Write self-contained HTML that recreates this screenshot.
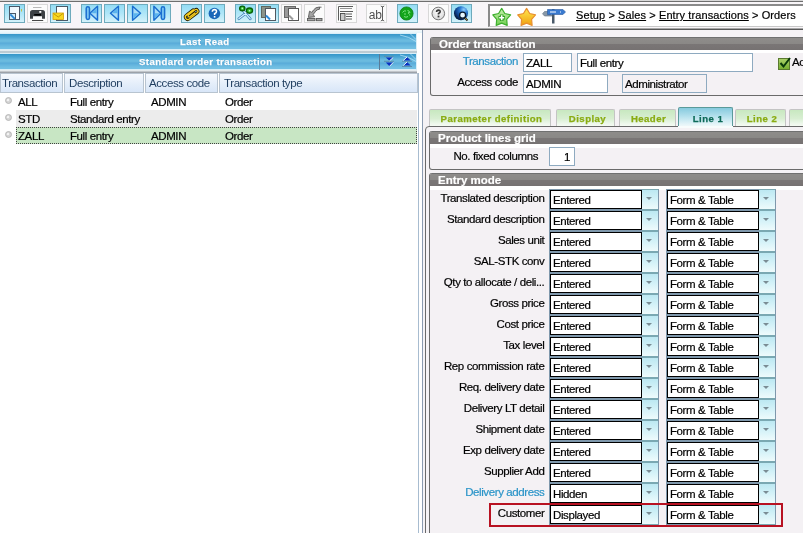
<!DOCTYPE html>
<html><head><meta charset="utf-8">
<style>
*{box-sizing:border-box;margin:0;padding:0}
html,body{width:803px;height:533px;overflow:hidden;-webkit-font-smoothing:antialiased;background:#f5f2f5;font-family:"Liberation Sans",sans-serif;font-size:11.5px;letter-spacing:-0.4px;color:#000}
.a{position:absolute}
.t{position:absolute;white-space:nowrap;line-height:13px;will-change:transform;-webkit-text-stroke:0.2px currentColor}
/* toolbar */
#tb{left:0;top:0;width:803px;height:30px;background:#f8f5f8;border-top:1px solid #d8d8d8}
.btn{position:absolute;top:4px;width:21px;height:19px;border:1px solid #6eaabc;background:linear-gradient(#94dcf4,#b0e6f8 50%,#d4f2fa)}
.btnw{position:absolute;top:4px;width:21px;height:19px;border:1px solid #d8d8d8;background:#fbfbfb}
/* blue bars */
.bar{position:absolute;left:0;width:417px;height:17px;background:linear-gradient(#3596c8 0px,#4aa6d4 3px,#6cbce0 6px,#68b8de 8px,#58aad8 9px,#5eb0dc 10px,#70bee2 13px,#78c2e4 16px);border:1px solid #d8eef8;border-left:none}
.bar .t{color:#fff;font-weight:bold;font-size:9.6px;letter-spacing:0.4px;-webkit-text-stroke:0.25px #fff;text-shadow:0 0 1px #2a7ab0}
/* grid */
.gh{position:absolute;top:73px;height:20px;border:1px solid #b8c4d0;background:linear-gradient(#f6f9fe,#e6effa 50%,#d8e6f8 100%);color:#1e3c5e}
.gh .t{-webkit-text-stroke:0}
.row{position:absolute;left:0;width:417px;height:17px}
/* right */
.box{position:absolute;border:1px solid #6a6a6a;border-top:none;border-radius:3px 0 0 3px;background:#f4f1f4}
.band{position:absolute;left:0;right:0;top:0;height:13px;background:linear-gradient(#707070 0px,#707070 1px,#8e8c8a 1px,#8a8886 7px,#7a7676 7px,#767272 13px);border-radius:2px 0 0 0}
.band .t{color:#fff;font-weight:bold;font-size:11.5px;letter-spacing:0;left:8px;top:1px}
.lbl{position:absolute;white-space:nowrap;text-align:right;line-height:13px;will-change:transform;-webkit-text-stroke:0.2px currentColor}
.inp{position:absolute;height:19px;border:1px solid #8eaac0;background:#fff}
.inp .t{left:2px;top:3px}
.sel{position:absolute;width:110px;height:22px;background:#7f98ac}
.sel .w{position:absolute;left:1px;top:1px;width:92px;height:19px;border:1px solid #000;background:#fff}
.sel .w .t{left:2px;top:3px}
.sel .dd{position:absolute;left:93px;top:0;width:16px;height:21px;border-top:1px solid #7aa8b2;border-bottom:1px solid #7aa8b2;background:linear-gradient(#bce8f2,#d4f2f8 50%,#eefbfc)}
.sel .dd:after{content:"";position:absolute;left:4px;top:7px;border-left:3.5px solid transparent;border-right:3.5px solid transparent;border-top:3.5px solid #7a8c94}
.tab{position:absolute;top:109px;height:18px;border:1px solid #c4c4c4;border-bottom:none;border-radius:2px 2px 0 0;background:linear-gradient(#c8e8c0,#d8eed2 50%,#eef8ec 80%,#f8fcf6);color:#8aac12;font-weight:bold;font-size:9.6px;letter-spacing:0.45px;text-align:center;line-height:16px;padding-top:1px;-webkit-text-stroke:0.25px currentColor;will-change:transform}
</style></head><body>

<!-- TOOLBAR -->
<div id="tb" class="a">
  <div class="a" style="left:0;top:0;width:803px;height:1px;background:#6e6e6e"></div>
  <div class="a" style="left:0;top:27px;width:803px;height:1px;background:#a8a8a8"></div>
  <div class="a" style="left:0;top:28px;width:803px;height:1px;background:#585858"></div>
</div>
<div class="btn" style="left:4px"></div>
<div class="btnw" style="left:27px"></div>
<div class="btn" style="left:50px"></div>
<div class="btn" style="left:81px"></div>
<div class="btn" style="left:104px"></div>
<div class="btn" style="left:127px"></div>
<div class="btn" style="left:150px"></div>
<div class="btn" style="left:181px"></div>
<div class="btn" style="left:204px"></div>
<div class="btn" style="left:235px"></div>
<div class="btn" style="left:258px"></div>
<div class="btnw" style="left:281px"></div>
<div class="btnw" style="left:304px"></div>
<div class="btnw" style="left:336px"></div>
<div class="btnw" style="left:366px"></div>
<div class="btn" style="left:397px"></div>
<div class="btnw" style="left:428px"></div>
<div class="btn" style="left:451px"></div>
<!-- breadcrumb -->
<div class="a" style="left:488px;top:4px;width:320px;height:23px;border-top:2px solid #8a8a8a;border-left:2px solid #8a8a8a;border-bottom:1px solid #c8c8c8;background:#fff"></div>
<div class="t" style="left:576px;top:9px;font-size:11px;letter-spacing:0.1px"><u>Setup</u> &gt; <u>Sales</u> &gt; <u>Entry transactions</u> &gt; Orders</div>

<svg class="a" style="left:0;top:0" width="803" height="30" viewBox="0 0 803 30">
<defs>
<linearGradient id="gy" x1="0" y1="0" x2="0" y2="1"><stop offset="0" stop-color="#ffe850"/><stop offset="1" stop-color="#f0a010"/></linearGradient>
<linearGradient id="gg" x1="0" y1="0" x2="0" y2="1"><stop offset="0" stop-color="#c8f0b0"/><stop offset="1" stop-color="#70d050"/></linearGradient>
<radialGradient id="glb" cx="0.4" cy="0.3" r="0.7"><stop offset="0" stop-color="#a0d8ff"/><stop offset="0.5" stop-color="#2070c0"/><stop offset="1" stop-color="#0a2050"/></radialGradient>
</defs>
<!-- new doc -->
<defs><linearGradient id="dg" x1="0" y1="0" x2="1" y2="1"><stop offset="0" stop-color="#e8f4fc"/><stop offset="1" stop-color="#ffffff"/></linearGradient></defs>
<rect x="9.5" y="6.5" width="10" height="13" fill="url(#dg)" stroke="#4a5868" stroke-width="1"/>
<rect x="9.5" y="13.5" width="6" height="6" fill="#d0ecfa" stroke="#4a5868"/>
<path d="M10.3 14.3 L14.8 18.8" stroke="#2a86d4" stroke-width="1.8"/>
<path d="M21.5 9 V11.5" stroke="#c8c040" stroke-width="1"/>
<!-- printer -->
<path d="M33 7.5 H41.5" stroke="#b8b8b8"/>
<path d="M30 12.5 Q30 10 32.5 10 H42.5 Q45 10 45 12.5 V18.7 H42 V16.2 H33 V18.7 H30 Z" fill="#3c4044"/>
<rect x="34.2" y="14" width="6.8" height="1.6" fill="#000"/>
<rect x="39.3" y="11" width="2" height="1.8" fill="#fff"/>
<path d="M32 20.5 H43.2" stroke="#484848" stroke-width="1"/>
<!-- mail doc -->
<rect x="56.5" y="6.5" width="11" height="14" fill="#fff" stroke="#4a5a68"/>
<rect x="53" y="13" width="10.5" height="6.5" fill="#f8d820" stroke="#d8a000" stroke-width="0.8"/>
<path d="M53.5 13.5 L58.2 17 L63 13.5" stroke="#c09000" stroke-width="0.9" fill="none"/>
<!-- nav -->
<g stroke="#1a6ed0" stroke-width="1.5" stroke-linejoin="round">
<rect x="86.2" y="6.8" width="3.3" height="12.7" rx="1.65" fill="#78c4f2"/>
<path d="M97.5 6.3 V20.3 L89.9 13.3 Z" fill="#a8dcf8"/>
<path d="M118.4 6.3 V20.3 L110.5 13.3 Z" fill="#a8dcf8"/>
<path d="M132.6 6.3 V20.3 L140.5 13.3 Z" fill="#a8dcf8"/>
<path d="M153.9 6.3 V20.3 L160.8 13.3 Z" fill="#a8dcf8"/>
<rect x="161.3" y="6.8" width="3.3" height="12.7" rx="1.65" fill="#78c4f2"/>
</g>
<g fill="#5ab4ee">
<path d="M96.6 8 L91.2 13.3 L96.6 13.3 Z"/>
<path d="M117.5 8 L111.8 13.3 L117.5 13.3 Z"/>
<path d="M133.5 13.3 L139.2 13.3 L133.5 18.6 Z"/>
<path d="M154.8 13.3 L159.6 13.3 L154.8 18.6 Z"/>
</g>
<!-- paperclip -->
<g transform="translate(191 14) rotate(-38) scale(0.88) translate(-191 -13.5)">
<path d="M196 11.2 H186 Q183.2 11.2 183.2 14 Q183.2 16.8 186 16.8 H197.5 Q199.6 16.8 199.6 14.6 Q199.6 12.6 197.5 12.6 H188 Q186.8 12.6 186.8 14 Q186.8 15.2 188 15.2 H195" fill="none" stroke="#1a1400" stroke-width="3.2" stroke-linecap="round"/>
<path d="M196 11.2 H186 Q183.2 11.2 183.2 14 Q183.2 16.8 186 16.8 H197.5 Q199.6 16.8 199.6 14.6 Q199.6 12.6 197.5 12.6 H188 Q186.8 12.6 186.8 14 Q186.8 15.2 188 15.2 H195" fill="none" stroke="#f4cc20" stroke-width="1.5" stroke-linecap="round"/>
</g>
<!-- help -->
<circle cx="214.4" cy="13.5" r="5.8" fill="#1a68b8"/>
<path d="M212.3 11.8 Q212.5 9.6 214.5 9.6 Q216.6 9.7 216.5 11.6 Q216.4 12.8 214.6 13.6 V15" stroke="#fff" stroke-width="1.5" fill="none"/>
<rect x="213.8" y="16" width="1.6" height="1.6" fill="#fff"/>
<!-- scissors -->
<path d="M238.8 18.8 L248.5 11 M243.5 11 L250.3 18.8" stroke="#3a78b0" stroke-width="2.6" stroke-linecap="round"/>
<path d="M238.8 18.8 L248.5 11 M243.5 11 L250.3 18.8" stroke="#d0f0ff" stroke-width="1.2" stroke-linecap="round"/>
<ellipse cx="242.3" cy="8.4" rx="2.6" ry="2.3" fill="#30c030" stroke="#086008" stroke-width="1.4"/>
<ellipse cx="249.5" cy="10.6" rx="3" ry="2.6" fill="#30c030" stroke="#086008" stroke-width="1.4"/>
<circle cx="242.3" cy="8.4" r="0.8" fill="#c8f8c0"/><circle cx="249.5" cy="10.8" r="0.8" fill="#c8f8c0"/>
<!-- copy -->
<rect x="261.5" y="6.5" width="9" height="11" fill="#8a948a" stroke="#606860"/>
<rect x="265.5" y="8.5" width="10" height="12" fill="#fff" stroke="#505860"/>
<path d="M266 15.5 L270 19.5" stroke="#2a8ad8" stroke-width="2"/>
<!-- paste gray -->
<rect x="284.5" y="6.5" width="11" height="11" fill="#9a9a9a" stroke="#686868"/>
<rect x="288.5" y="8.5" width="10" height="12" fill="#fff" stroke="#585858"/>
<path d="M289 15.5 L293 19.5" stroke="#9a9a9a" stroke-width="2"/>
<!-- gray arrow -->
<path d="M319.5 7 Q315.5 7 313.5 10 L311.8 12.4 L309.5 11.2 L308.4 17.4 L314.6 16.8 L313.2 14.4 L315.6 11.4 Q316.8 9.4 319.5 9.2 Z" fill="#a4a4a4" stroke="#5a5a5a" stroke-width="0.9" stroke-linejoin="round"/>
<path d="M319.5 7.2 H321.5" stroke="#5a5a5a" stroke-width="0.9"/>
<rect x="307.5" y="18.5" width="7.5" height="2.2" fill="#a8a8a8" stroke="#5a5a5a" stroke-width="0.9"/>
<rect x="316.5" y="18.5" width="5.5" height="2.2" fill="#a8a8a8" stroke="#5a5a5a" stroke-width="0.9"/>
<!-- form -->
<path d="M338.5 6.5 H353 M338.5 6.5 V20.5 M340 11.5 H353 M346 14 H352 M346 16.5 H352 M346 19 H352" stroke="#484848" stroke-width="0.9" fill="none"/>
<path d="M340 9 l1 -1 l1 1 l1 -1 l1 1 l1 -1 l1 1 l1 -1 l1 1 l1 -1 l1 1 l1 -1 l1 1" stroke="#686868" stroke-width="0.7" fill="none"/>
<rect x="340.5" y="13.5" width="4.5" height="7" fill="#c8c8c8" stroke="#484848" stroke-width="0.9"/>
<!-- ab -->
<text x="368.8" y="19.2" font-family="Liberation Sans" font-size="12" fill="#505050" letter-spacing="-0.3">ab</text>
<path d="M382.5 6.5 V20.5 M380.8 6 L382.5 7 L384.2 6 M380.8 21 L382.5 20 L384.2 21" stroke="#3a3a3a" stroke-width="0.8" fill="none"/>
<!-- green globe -->
<circle cx="406.5" cy="13.5" r="6.6" fill="#12a41a" stroke="#0a7a12" stroke-width="0.8"/>
<path d="M402.5 12.5 q1.5 -2.5 3.5 -1.5 M404 16.5 q2 1.5 4 0 M407.5 10.5 q2 0 2.5 2.5 M409 14.5 l1.2 1" stroke="#7ae080" stroke-width="1" fill="none"/>
<circle cx="405" cy="14" r="0.7" fill="#a0f0a0"/><circle cx="408.6" cy="13" r="0.7" fill="#a0f0a0"/>
<!-- gray help -->
<defs><radialGradient id="ghg" cx="0.5" cy="0.4" r="0.6"><stop offset="0" stop-color="#ffffff"/><stop offset="1" stop-color="#d8d8d8"/></radialGradient>
<radialGradient id="glb2" cx="0.7" cy="0.25" r="0.8"><stop offset="0" stop-color="#90d0ff"/><stop offset="0.35" stop-color="#2878d0"/><stop offset="0.75" stop-color="#0c3a80"/><stop offset="1" stop-color="#061838"/></radialGradient></defs>
<circle cx="438.3" cy="13.5" r="6.3" fill="url(#ghg)" stroke="#6a6a6a" stroke-width="0.9"/>
<path d="M436.6 12 Q436.7 10.2 438.4 10.2 Q440.2 10.3 440.1 11.9 Q440 12.9 438.5 13.6 V14.6" stroke="#383838" stroke-width="1.7" fill="none"/>
<rect x="437.6" y="15.6" width="1.8" height="1.8" fill="#383838"/>
<!-- globe search -->
<circle cx="461" cy="13.2" r="7" fill="url(#glb2)"/>
<path d="M464.5 17.5 L467.5 20.5" stroke="#202020" stroke-width="1.8"/>
<path d="M464.8 17.8 L467.2 20.2" stroke="#c8a030" stroke-width="0.8"/>
<circle cx="462.6" cy="15.2" r="3" fill="#e8f8ff" stroke="#0a1a30" stroke-width="1.3"/>
<!-- stars -->
<path d="M501.7 8.4 L504.8 13.5 L510.6 14.9 L506.7 19.4 L507.2 25.4 L501.7 23.1 L496.2 25.4 L496.7 19.4 L492.8 14.9 L498.6 13.5 Z" fill="url(#gg)" stroke="#40b030" stroke-width="1.2" stroke-linejoin="round"/>
<path d="M501.7 14.5 V21 M498.5 17.8 H505" stroke="#30a020" stroke-width="3.6"/>
<path d="M501.7 15.3 V20.3 M499.2 17.8 H504.2" stroke="#fff" stroke-width="1.6"/>
<path d="M526.6 8.4 L529.7 13.5 L535.5 14.9 L531.6 19.4 L532.1 25.4 L526.6 23.1 L521.1 25.4 L521.6 19.4 L517.7 14.9 L523.5 13.5 Z" fill="url(#gy)" stroke="#e89030" stroke-width="1.2" stroke-linejoin="round"/>
<!-- signpost -->
<rect x="552" y="9" width="2.5" height="14.5" fill="#4a5a6a"/>
<path d="M548 11.5 H544.5 L542.5 13.8 L544.5 16 H552 Z" fill="#8898a8" stroke="#607080" stroke-width="0.6"/>
<path d="M547.5 9.5 H563 L565.5 12 L563 14.5 H547.5 Z" fill="#3a7ad0" stroke="#2a5aa0" stroke-width="0.6"/>
<path d="M550 12 H556 M560 12 H561" stroke="#fff" stroke-width="1"/>
</svg>
<!-- LEFT PANEL -->
<div class="a" style="left:0;top:30px;width:422px;height:503px;background:#fff"></div>
<div class="a" style="left:0;top:30px;width:422px;height:3px;background:linear-gradient(#f4fafc,#e4f4fa)"></div>
<div class="bar" style="top:33px"><div class="t" style="left:180px;top:1px">Last Read</div></div>
<div class="a" style="left:0;top:50px;width:417px;height:4px;background:linear-gradient(#f8fcfe,#b8c8d0 40%,#b8c8d0 60%,#f0f8fc)"></div>
<div class="bar" style="top:53px"><div class="t" style="left:139px;top:1px">Standard order transaction</div>
  <div class="a" style="left:379px;top:0;width:1px;height:16px;background:#5a7c98"></div>
</div>
<div class="a" style="left:0;top:70px;width:417px;height:3px;background:linear-gradient(#f8fcfe,#8a9098)"></div>

<div class="gh" style="left:0;width:63px"><div class="t" style="left:1px;top:3px">Transaction</div></div>
<div class="gh" style="left:64px;width:80px"><div class="t" style="left:4px;top:3px">Description</div></div>
<div class="gh" style="left:145px;width:73px"><div class="t" style="left:3px;top:3px">Access code</div></div>
<div class="gh" style="left:219px;width:199px"><div class="t" style="left:4px;top:3px">Transaction type</div></div>

<div class="row" style="top:93px;background:#fff"></div>
<div class="row" style="top:110px;left:16px;width:401px;background:#ececec"></div>
<div class="row" style="top:127px;left:16px;width:401px;background:#c8e6c4;border:1px dotted #404040"></div>
<div class="t" style="left:18px;top:96px">ALL</div><div class="t" style="left:70px;top:96px">Full entry</div><div class="t" style="left:151px;top:96px">ADMIN</div><div class="t" style="left:225px;top:96px">Order</div>
<div class="t" style="left:18px;top:113px">STD</div><div class="t" style="left:70px;top:113px">Standard entry</div><div class="t" style="left:225px;top:113px">Order</div>
<div class="t" style="left:18px;top:130px">ZALL</div><div class="t" style="left:70px;top:130px">Full entry</div><div class="t" style="left:151px;top:130px">ADMIN</div><div class="t" style="left:225px;top:130px">Order</div>

<svg class="a" style="left:0;top:30px" width="422" height="120" viewBox="0 30 422 120">
<path d="M400 35 Q409 36.5 416 41.5 M410.5 34 L416 39.5" stroke="#b8e4f8" stroke-width="0.8" fill="none" opacity="0.9"/>
<path d="M400 55 Q409 56.5 416 61.5 M410.5 54 L416 59.5" stroke="#b8e4f8" stroke-width="0.8" fill="none" opacity="0.9"/>
<g>
<path d="M384 56.3 H394 M384 61.3 H394" stroke="#5a8aa8" stroke-width="0.9"/>
<path d="M385.8 57.5 H393.2 L389.5 60.8 Z M385.8 62.5 H393.2 L389.5 66.3 Z" fill="#0a30c0"/>
<path d="M389.5 60.8 L393.2 57.5 M389.5 66.3 L393.2 62.5" stroke="#fff" stroke-width="0.9"/>
<path d="M402 61.3 H412 M402 66.5 H412" stroke="#5a8aa8" stroke-width="0.9"/>
<path d="M403.3 60.5 H410.7 L407 57 Z M403.3 65.5 H410.7 L407 62 Z" fill="#0a30c0"/>
<path d="M403.3 60.5 L407 57 M403.3 65.5 L407 62" stroke="#fff" stroke-width="0.9"/>
</g>
<g fill="#d4d4d4" stroke="#b0b0b0" stroke-width="0.8">
<circle cx="8.5" cy="100.5" r="3"/><circle cx="8.5" cy="117.5" r="3"/><circle cx="8.5" cy="134.5" r="3"/>
</g>
<g fill="#f4f4f4"><circle cx="8" cy="100" r="1.2"/><circle cx="8" cy="117" r="1.2"/><circle cx="8" cy="134" r="1.2"/></g>
</svg>
<div class="a" style="left:418px;top:73px;width:1px;height:460px;background:#a8bcd0"></div>
<div class="a" style="left:422px;top:30px;width:1px;height:503px;background:#8a9ab0"></div>
<div class="a" style="left:423px;top:30px;width:380px;height:503px;background:#f5f2f5"></div>

<!-- RIGHT PANEL -->
<div class="box" style="left:430px;top:37px;width:380px;height:59px">
  <div class="band"><div class="t">Order transaction</div></div>
  <div class="a" style="left:0;top:13px;width:100%;height:3px;background:#fff"></div>
</div>
<div class="lbl" style="left:440px;width:78px;top:55px;color:#2a94c8">Transaction</div>
<div class="lbl" style="left:440px;width:78px;top:76px">Access code</div>
<div class="inp" style="left:523px;top:53px;width:49px"><div class="t">ZALL</div></div>
<div class="inp" style="left:577px;top:53px;width:176px"><div class="t">Full entry</div></div>
<div class="inp" style="left:523px;top:74px;width:85px"><div class="t">ADMIN</div></div>
<div class="inp" style="left:622px;top:74px;width:85px;background:#f4f1f4"><div class="t">Administrator</div></div>

<div class="a" style="left:778px;top:58px;width:12px;height:12px;border:1px solid #5a7a30;background:linear-gradient(#a8d068,#78b030)"></div>
<svg class="a" style="left:778px;top:56px" width="14" height="14" viewBox="0 0 14 14"><path d="M2.5 7 L5.5 10.5 L12 2" stroke="#0a3a0a" stroke-width="2" fill="none"/></svg>
<div class="t" style="left:792px;top:56px">Ac</div>
<!-- tabs -->
<div class="tab" style="left:429px;width:122px;padding-left:3px">Parameter definition</div>
<div class="tab" style="left:556px;width:59px;padding-left:4px">Display</div>
<div class="tab" style="left:619px;width:57px;padding-left:2px">Header</div>
<div class="tab" style="left:678px;top:107px;width:55px;height:21px;border-color:#5a9a9a;background:linear-gradient(#86cade,#b8e2ee 45%,#e4f4f8 80%,#f8fcfc);color:#0e6a5a;line-height:20px;padding-left:5px;padding-top:1px">Line 1</div>
<div class="tab" style="left:735px;width:51px;padding-left:3px">Line 2</div>
<div class="tab" style="left:789px;width:40px"></div>

<div class="a" style="left:425px;top:126px;width:400px;height:420px;border:1px solid #6a6a6a;border-radius:4px 0 0 0;background:#f5f2f5"></div>
<div class="a" style="left:678px;top:126px;width:55px;height:2px;background:#f8fcfc"></div>

<div class="box" style="left:429px;top:131px;width:380px;height:39px">
  <div class="band"><div class="t">Product lines grid</div></div>
  <div class="a" style="left:0;top:13px;width:100%;height:4px;background:#fff"></div>
</div>
<div class="lbl" style="left:440px;width:98px;top:150px">No. fixed columns</div>
<div class="inp" style="left:549px;top:147px;width:26px;height:19px"><div class="t" style="left:14px">1</div></div>

<div class="box" style="left:429px;top:173px;width:380px;height:400px">
  <div class="band"><div class="t">Entry mode</div></div>
  <div class="a" style="left:0;top:13px;width:100%;height:4px;background:#fff"></div>
</div>

<div class="lbl" style="left:420px;width:124.4px;top:192px">Translated description</div>
<div class="sel" style="left:549px;top:189px"><div class="w"><div class="t">Entered</div></div><div class="dd"></div></div>
<div class="sel" style="left:666px;top:189px"><div class="w"><div class="t">Form &amp; Table</div></div><div class="dd"></div></div>
<div class="lbl" style="left:420px;width:124.4px;top:213px">Standard description</div>
<div class="sel" style="left:549px;top:210px"><div class="w"><div class="t">Entered</div></div><div class="dd"></div></div>
<div class="sel" style="left:666px;top:210px"><div class="w"><div class="t">Form &amp; Table</div></div><div class="dd"></div></div>
<div class="lbl" style="left:420px;width:124.4px;top:234px">Sales unit</div>
<div class="sel" style="left:549px;top:231px"><div class="w"><div class="t">Entered</div></div><div class="dd"></div></div>
<div class="sel" style="left:666px;top:231px"><div class="w"><div class="t">Form &amp; Table</div></div><div class="dd"></div></div>
<div class="lbl" style="left:420px;width:124.4px;top:255px">SAL-STK conv</div>
<div class="sel" style="left:549px;top:252px"><div class="w"><div class="t">Entered</div></div><div class="dd"></div></div>
<div class="sel" style="left:666px;top:252px"><div class="w"><div class="t">Form &amp; Table</div></div><div class="dd"></div></div>
<div class="lbl" style="left:420px;width:124.4px;top:276px">Qty to allocate / deli...</div>
<div class="sel" style="left:549px;top:273px"><div class="w"><div class="t">Entered</div></div><div class="dd"></div></div>
<div class="sel" style="left:666px;top:273px"><div class="w"><div class="t">Form &amp; Table</div></div><div class="dd"></div></div>
<div class="lbl" style="left:420px;width:124.4px;top:297px">Gross price</div>
<div class="sel" style="left:549px;top:294px"><div class="w"><div class="t">Entered</div></div><div class="dd"></div></div>
<div class="sel" style="left:666px;top:294px"><div class="w"><div class="t">Form &amp; Table</div></div><div class="dd"></div></div>
<div class="lbl" style="left:420px;width:124.4px;top:318px">Cost price</div>
<div class="sel" style="left:549px;top:315px"><div class="w"><div class="t">Entered</div></div><div class="dd"></div></div>
<div class="sel" style="left:666px;top:315px"><div class="w"><div class="t">Form &amp; Table</div></div><div class="dd"></div></div>
<div class="lbl" style="left:420px;width:124.4px;top:339px">Tax level</div>
<div class="sel" style="left:549px;top:336px"><div class="w"><div class="t">Entered</div></div><div class="dd"></div></div>
<div class="sel" style="left:666px;top:336px"><div class="w"><div class="t">Form &amp; Table</div></div><div class="dd"></div></div>
<div class="lbl" style="left:420px;width:124.4px;top:360px">Rep commission rate</div>
<div class="sel" style="left:549px;top:357px"><div class="w"><div class="t">Entered</div></div><div class="dd"></div></div>
<div class="sel" style="left:666px;top:357px"><div class="w"><div class="t">Form &amp; Table</div></div><div class="dd"></div></div>
<div class="lbl" style="left:420px;width:124.4px;top:381px">Req. delivery date</div>
<div class="sel" style="left:549px;top:378px"><div class="w"><div class="t">Entered</div></div><div class="dd"></div></div>
<div class="sel" style="left:666px;top:378px"><div class="w"><div class="t">Form &amp; Table</div></div><div class="dd"></div></div>
<div class="lbl" style="left:420px;width:124.4px;top:402px">Delivery LT detail</div>
<div class="sel" style="left:549px;top:399px"><div class="w"><div class="t">Entered</div></div><div class="dd"></div></div>
<div class="sel" style="left:666px;top:399px"><div class="w"><div class="t">Form &amp; Table</div></div><div class="dd"></div></div>
<div class="lbl" style="left:420px;width:124.4px;top:423px">Shipment date</div>
<div class="sel" style="left:549px;top:420px"><div class="w"><div class="t">Entered</div></div><div class="dd"></div></div>
<div class="sel" style="left:666px;top:420px"><div class="w"><div class="t">Form &amp; Table</div></div><div class="dd"></div></div>
<div class="lbl" style="left:420px;width:124.4px;top:444px">Exp delivery date</div>
<div class="sel" style="left:549px;top:441px"><div class="w"><div class="t">Entered</div></div><div class="dd"></div></div>
<div class="sel" style="left:666px;top:441px"><div class="w"><div class="t">Form &amp; Table</div></div><div class="dd"></div></div>
<div class="lbl" style="left:420px;width:124.4px;top:465px">Supplier Add</div>
<div class="sel" style="left:549px;top:462px"><div class="w"><div class="t">Entered</div></div><div class="dd"></div></div>
<div class="sel" style="left:666px;top:462px"><div class="w"><div class="t">Form &amp; Table</div></div><div class="dd"></div></div>
<div class="lbl" style="left:420px;width:124.4px;top:486px;color:#2a94c8">Delivery address</div>
<div class="sel" style="left:549px;top:483px"><div class="w"><div class="t">Hidden</div></div><div class="dd"></div></div>
<div class="sel" style="left:666px;top:483px"><div class="w"><div class="t">Form &amp; Table</div></div><div class="dd"></div></div>
<div class="lbl" style="left:420px;width:124.4px;top:507px">Customer</div>
<div class="sel" style="left:549px;top:504px"><div class="w"><div class="t">Displayed</div></div><div class="dd"></div></div>
<div class="sel" style="left:666px;top:504px"><div class="w"><div class="t">Form &amp; Table</div></div><div class="dd"></div></div>
<div class="a" style="left:489px;top:503px;width:294px;height:24px;border:2px solid #b81222"></div>
</body></html>
